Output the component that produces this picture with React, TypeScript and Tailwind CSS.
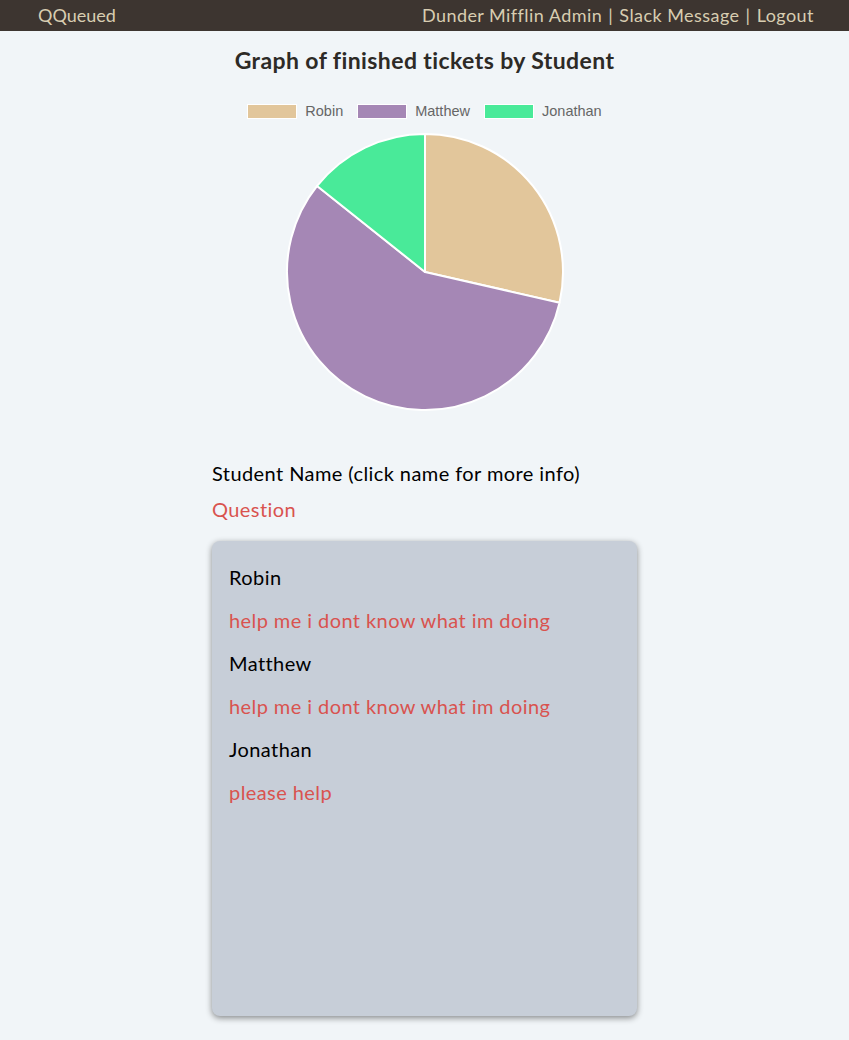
import React from 'react';

const FONT = { fontFamily: '"Lato", "Open Sans", sans-serif' };

const slices = [
  { name: 'Robin', value: 2, color: '#e2c69b' },
  { name: 'Matthew', value: 4, color: '#a587b5' },
  { name: 'Jonathan', value: 1, color: '#49ea99' },
];

const tickets = [
  { name: 'Robin', question: 'help me i dont know what im doing' },
  { name: 'Matthew', question: 'help me i dont know what im doing' },
  { name: 'Jonathan', question: 'please help' },
];

function PieChart() {
  const cx = 140;
  const cy = 140;
  const r = 138;
  const total = slices.reduce((s, x) => s + x.value, 0);
  let start = 0;
  const point = (a: number) => {
    const rad = (a * Math.PI) / 180;
    return [cx + r * Math.sin(rad), cy - r * Math.cos(rad)];
  };
  return (
    <svg width="280" height="280" viewBox="0 0 280 280">
      {slices.map((s) => {
        const sweep = (s.value / total) * 360;
        const [x1, y1] = point(start);
        const [x2, y2] = point(start + sweep);
        const large = sweep > 180 ? 1 : 0;
        const d = `M ${cx} ${cy} L ${x1} ${y1} A ${r} ${r} 0 ${large} 1 ${x2} ${y2} Z`;
        start += sweep;
        return <path key={s.name} d={d} fill={s.color} stroke="#ffffff" strokeWidth="2" strokeLinejoin="round" />;
      })}
    </svg>
  );
}

export default function App() {
  return (
    <div className="min-h-[1040px] bg-[#f1f5f8]" style={FONT}>
      <header className="h-[31px] bg-[#3d3530] flex items-center justify-between pl-[38px] pr-[35px] text-[18px] tracking-[0.45px] text-[#d8cdb1]">
        <span className="tracking-normal">QQueued</span>
        <span>
          Dunder Mifflin Admin <span className="mx-[1px]">|</span> Slack Message <span className="mx-[1px]">|</span> Logout
        </span>
      </header>

      <h1 className="mt-[15px] text-center text-[23px] leading-[28px] tracking-[0.4px] font-bold text-[#2d2a26]">
        Graph of finished tickets by Student
      </h1>

      <div className="mt-[27px] flex justify-center items-center gap-[14px] text-[14.5px] text-[#666666]" style={{ fontFamily: '"Liberation Sans", Arial, sans-serif' }}>
        {slices.map((s) => (
          <div key={s.name} className="flex items-center gap-[8px]">
            <span className="w-[50px] h-[15px] border border-white" style={{ backgroundColor: s.color }} />
            <span>{s.name}</span>
          </div>
        ))}
      </div>

      <div className="mt-[9px] flex justify-center">
        <PieChart />
      </div>

      <div className="w-[425px] mx-auto mt-[48px] text-[20px] tracking-[0.42px]">
        <div className="leading-[26px] text-black">Student Name (click name for more info)</div>
        <div className="mt-[10px] leading-[26px] text-[#d9534f]">Question</div>

        <div className="mt-[19px] h-[475px] bg-[#c7ced8] rounded-[8px] shadow-[0_2px_6px_rgba(0,0,0,0.45)] px-[17px] pt-[23px]">
          {tickets.map((t) => (
            <div key={t.name}>
              <div className="h-[43px] leading-[26px] text-black">{t.name}</div>
              <div className="h-[43px] leading-[26px] text-[#d9534f]">{t.question}</div>
            </div>
          ))}
        </div>
      </div>
    </div>
  );
}
